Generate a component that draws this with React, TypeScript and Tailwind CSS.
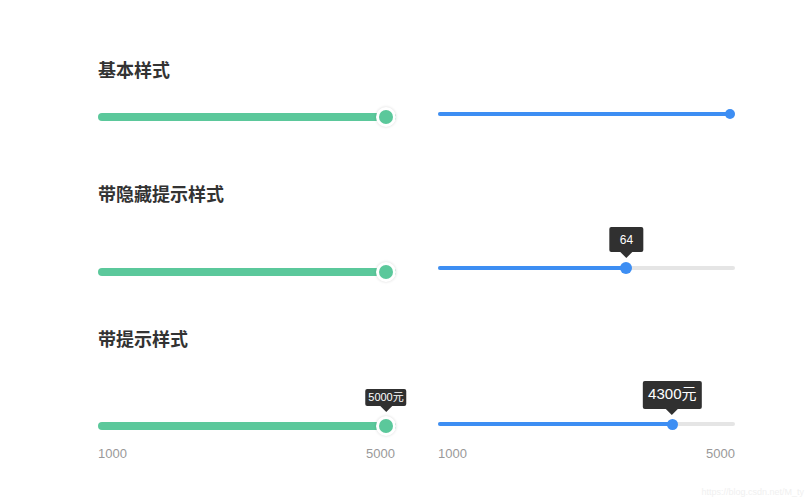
import type { ReactNode } from 'react'

const GREEN = 'bg-[#5bc89b]'

type TipSize = 'sm' | 'md' | 'lg'

function Tip({ size, children }: { size: TipSize; children: ReactNode }) {
  const box =
    size === 'sm'
      ? 'h-[17px] px-[3px] text-[11px]'
      : size === 'md'
        ? 'h-[25px] px-[10px] text-[12px]'
        : 'h-[28px] px-[5px] text-[15px]'
  return (
    <div className="absolute bottom-full left-1/2 -translate-x-1/2 mb-[4px] flex flex-col items-center pointer-events-none">
      <div className={`flex items-center whitespace-nowrap rounded-[2px] bg-[#303030] text-white ${box}`}>
        {children}
      </div>
      <div className="h-0 w-0 border-x-[6px] border-t-[6px] border-x-transparent border-t-[#303030]" />
    </div>
  )
}

// thick green track with a white-ringed handle
function GreenSlider({ pct, tip }: { pct: number; tip?: ReactNode }) {
  return (
    <div className="relative flex h-5 items-center">
      <div className={`h-2 w-full rounded-full ${GREEN}`} />
      <div
        className="absolute top-0 flex h-5 w-5 items-center justify-center rounded-full bg-white shadow-[0_0_3px_rgba(0,0,0,0.15)]"
        style={{ left: `calc((100% - 20px) * ${pct / 100})` }}
      >
        <div className={`h-[14px] w-[14px] rounded-full ${GREEN}`} />
        {tip && <Tip size="sm">{tip}</Tip>}
      </div>
    </div>
  )
}

// thin blue track on a grey rail
function BlueSlider({ pct, thumb, tip, tipSize }: { pct: number; thumb: number; tip?: ReactNode; tipSize?: TipSize }) {
  return (
    <div className="relative flex h-3 items-center">
      <div className="h-1 w-full rounded-full bg-[#e5e5e5]">
        <div
          className="h-1 rounded-full bg-[#3d8ef3]"
          style={{ width: `calc((100% - ${thumb}px) * ${pct / 100} + ${thumb / 2}px)` }}
        />
      </div>
      <div
        className="absolute top-1/2 rounded-full bg-[#3d8ef3]"
        style={{
          width: thumb,
          height: thumb,
          marginTop: -thumb / 2,
          left: `calc((100% - ${thumb}px) * ${pct / 100})`,
        }}
      >
        {tip && <Tip size={tipSize ?? 'md'}>{tip}</Tip>}
      </div>
    </div>
  )
}

function Title({ children }: { children: ReactNode }) {
  return <h2 className="h-6 text-[18px] font-bold leading-6 text-[#333]">{children}</h2>
}

export default function App() {
  return (
    <div className="min-h-[500px] w-full bg-white pl-[98px] pt-[59px] font-['Liberation_Sans','Noto_Sans_CJK_SC',sans-serif]">
      <Title>基本样式</Title>
      <div className="mt-[24px] grid grid-cols-[298px_297px] items-start gap-x-[42px]">
        <GreenSlider pct={100} />
        <div className="mt-[1px]">
          <BlueSlider pct={100} thumb={10} />
        </div>
      </div>

      <div className="mt-[56px]">
        <Title>带隐藏提示样式</Title>
      </div>
      <div className="mt-[55px] grid grid-cols-[298px_297px] items-start gap-x-[42px]">
        <GreenSlider pct={100} />
        <BlueSlider pct={64} thumb={12} tip="64" tipSize="md" />
      </div>

      <div className="mt-[46px]">
        <Title>带提示样式</Title>
      </div>
      <div className="mt-[64px] grid grid-cols-[298px_297px] items-start gap-x-[42px]">
        <GreenSlider pct={100} tip="5000元" />
        <div className="mt-[2px]">
          <BlueSlider pct={80} thumb={11} tip="4300元" tipSize="lg" />
        </div>
      </div>
      <div className="mt-[10px] grid grid-cols-[298px_297px] gap-x-[42px] text-[13px] leading-4 text-[#999]">
        <div className="flex justify-between pr-[1px]">
          <span>1000</span>
          <span>5000</span>
        </div>
        <div className="flex justify-between">
          <span>1000</span>
          <span>5000</span>
        </div>
      </div>

      <div className="mt-[24px] pr-[5px] text-right text-[9px] leading-3 text-[#f0f0f0]">
        https://blog.csdn.net/M_ty
      </div>
    </div>
  )
}
